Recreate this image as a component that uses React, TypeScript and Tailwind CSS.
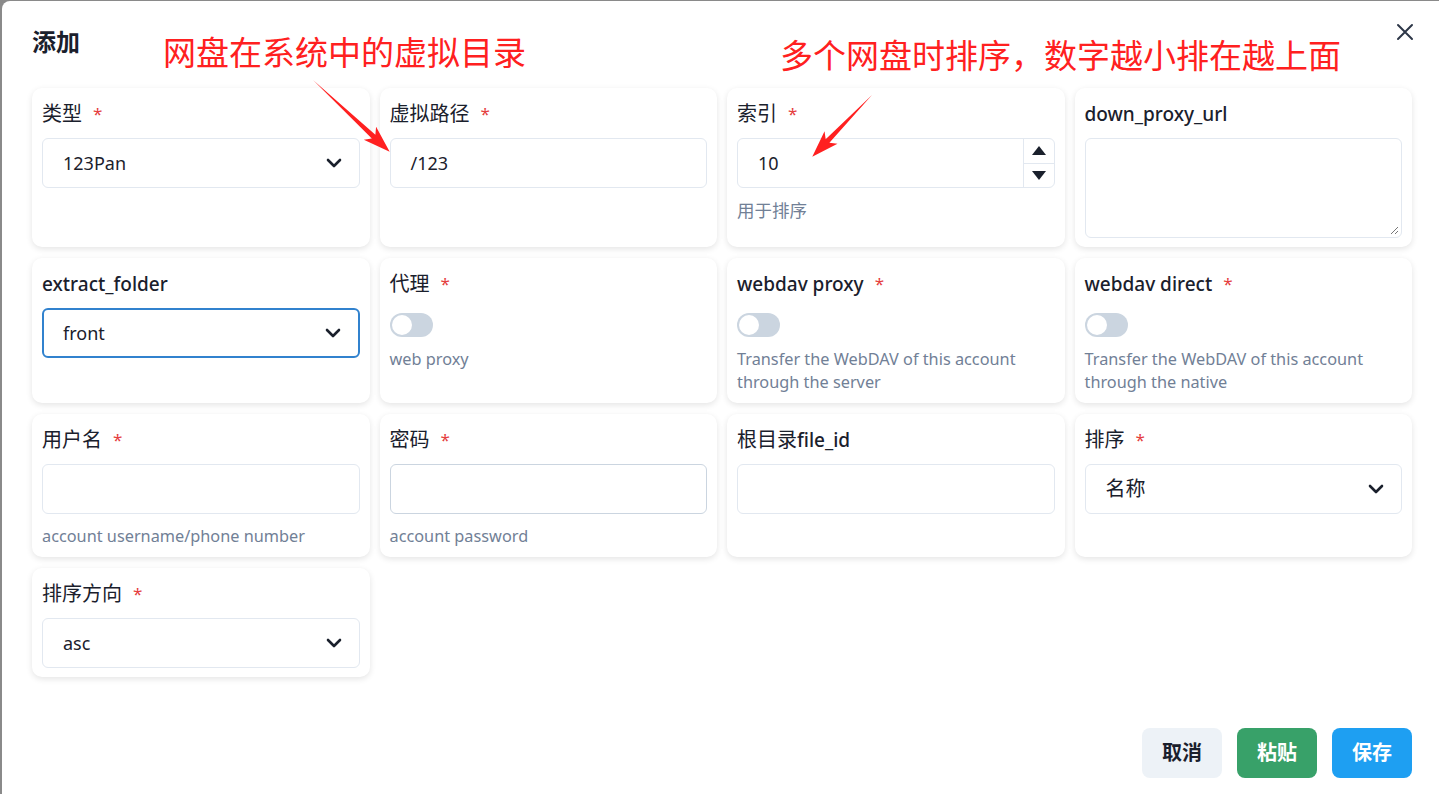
import React from "react";

const FONT = "font-['Noto_Sans','Noto_Sans_CJK_SC',sans-serif]";

function Chevron() {
  return (
    <svg
      className="absolute right-[13px] top-1/2 -translate-y-1/2"
      width="24"
      height="24"
      viewBox="0 0 24 24"
      fill="none"
      stroke="#1a202c"
      strokeWidth="2.6"
      strokeLinecap="round"
      strokeLinejoin="round"
    >
      <path d="m6 9 6 6 6-6" />
    </svg>
  );
}

function Label({ children, required }: { children: React.ReactNode; required?: boolean }) {
  return (
    <div className="h-[32px] flex items-center text-[19px] text-[#1a202c] mb-[8px]">
      <span>{children}</span>
      {required && <span className="ml-[11px] text-[#e53e3e] text-[17px]">*</span>}
    </div>
  );
}

function Zh({ children }: { children: React.ReactNode }) {
  return <span className="text-[20px]">{children}</span>;
}

function Help({ children }: { children: React.ReactNode }) {
  return <div className="mt-[11px] text-[16.3px] leading-[23px] text-[#718096]">{children}</div>;
}

function Card({ children }: { children: React.ReactNode }) {
  return (
    <div className="rounded-[10px] bg-white shadow-[0_2px_6px_rgba(0,0,0,0.11)] px-[10px] pt-[10px] pb-[9px]">
      {children}
    </div>
  );
}

function Select({ value, focused }: { value: React.ReactNode; focused?: boolean }) {
  return (
    <div
      className={
        focused
          ? "relative h-[50px] rounded-[6px] border-2 border-[#3182ce] flex items-center pl-[19px] text-[18px] text-[#1a202c]"
          : "relative h-[50px] rounded-[6px] border border-[#e2e8f0] flex items-center pl-[20px] text-[18px] text-[#1a202c]"
      }
    >
      {value}
      <Chevron />
    </div>
  );
}

function Input({ value, hover }: { value?: string; hover?: boolean }) {
  return (
    <div
      className={
        hover
          ? "h-[50px] rounded-[6px] border border-[#cbd5e0] flex items-center pl-[20px] text-[18px] text-[#1a202c]"
          : "h-[50px] rounded-[6px] border border-[#e2e8f0] flex items-center pl-[20px] text-[18px] text-[#1a202c]"
      }
    >
      {value}
    </div>
  );
}

function Switch() {
  return (
    <div className="mt-[13px] w-[43px] h-[24px] rounded-full bg-[#cbd5e0] flex items-center">
      <div className="ml-[2px] w-[20px] h-[20px] rounded-full bg-white" />
    </div>
  );
}

function Arrow({ x, y, angle, len }: { x: number; y: number; angle: number; len: number }) {
  const L = len;
  const pts = `0,0 ${L - 22},2.6 ${L - 27},9 ${L},0 ${L - 27},-9 ${L - 22},-2.6`;
  return (
    <g transform={`translate(${x},${y}) rotate(${angle})`}>
      <polygon points={pts} fill="#ff2020" />
    </g>
  );
}

export default function App() {
  return (
    <div className={`h-screen w-full overflow-hidden bg-[#8a8a8a] ${FONT}`}>
      <div className="relative ml-[2px] mt-[1px] w-[1440px] h-[900px] bg-white rounded-tl-[8px] px-[30px] pt-[25px]">
        <div className="h-[32px] flex items-center text-[24px] font-bold text-[#1a202c]">添加</div>
        <button className="absolute right-[28px] top-[22px] w-[18px] h-[18px] flex items-center justify-center">
          <svg width="18" height="18" viewBox="0 0 18 18" fill="none" stroke="#2d3748" strokeWidth="2" strokeLinecap="round">
            <path d="M2 2 L16 16 M16 2 L2 16" />
          </svg>
        </button>

        <div className="mt-[30px] grid grid-cols-4 gap-x-[10px] gap-y-[11px]">
          <Card>
            <Label required><Zh>类型</Zh></Label>
            <Select value="123Pan" />
          </Card>
          <Card>
            <Label required><Zh>虚拟路径</Zh></Label>
            <Input value="/123" />
          </Card>
          <Card>
            <Label required><Zh>索引</Zh></Label>
            <div className="h-[50px] rounded-[6px] border border-[#e2e8f0] flex items-stretch text-[18px] text-[#1a202c]">
              <div className="flex-1 flex items-center pl-[20px]">10</div>
              <div className="w-[31px] border-l border-[#e2e8f0] flex flex-col">
                <div className="flex-1 flex items-center justify-center border-b border-[#e2e8f0]">
                  <svg width="14" height="9" viewBox="0 0 14 9"><polygon points="7,0 14,9 0,9" fill="#1a202c" /></svg>
                </div>
                <div className="flex-1 flex items-center justify-center">
                  <svg width="14" height="9" viewBox="0 0 14 9"><polygon points="0,0 14,0 7,9" fill="#1a202c" /></svg>
                </div>
              </div>
            </div>
            <Help><span className="text-[17.5px]">用于排序</span></Help>
          </Card>
          <Card>
            <Label>
              <span className="font-medium">down_proxy_url</span>
            </Label>
            <div className="relative h-[100px] rounded-[6px] border border-[#e2e8f0]">
              <svg className="absolute right-[2px] bottom-[2px]" width="10" height="10" viewBox="0 0 10 10" stroke="#777" strokeWidth="1">
                <path d="M9 2 L2 9 M9 6 L6 9" />
              </svg>
            </div>
          </Card>

          <Card>
            <Label>
              <span className="font-medium">extract_folder</span>
            </Label>
            <Select value="front" focused />
          </Card>
          <Card>
            <Label required><Zh>代理</Zh></Label>
            <Switch />
            <Help>web proxy</Help>
          </Card>
          <Card>
            <Label required>
              <span className="font-medium">webdav proxy</span>
            </Label>
            <Switch />
            <Help>
              Transfer the WebDAV of this account
              <br />
              through the server
            </Help>
          </Card>
          <Card>
            <Label required>
              <span className="font-medium">webdav direct</span>
            </Label>
            <Switch />
            <Help>
              Transfer the WebDAV of this account
              <br />
              through the native
            </Help>
          </Card>

          <Card>
            <Label required><Zh>用户名</Zh></Label>
            <Input />
            <Help>account username/phone number</Help>
          </Card>
          <Card>
            <Label required><Zh>密码</Zh></Label>
            <Input hover />
            <Help>account password</Help>
          </Card>
          <Card>
            <Label>
              <Zh>根目录</Zh><span className="font-medium">file_id</span>
            </Label>
            <Input />
          </Card>
          <Card>
            <Label required><Zh>排序</Zh></Label>
            <Select value={<span className="text-[20px]">名称</span>} />
          </Card>

          <Card>
            <Label required><Zh>排序方向</Zh></Label>
            <Select value="asc" />
          </Card>
        </div>

        <div className="mt-[51px] flex justify-end gap-[15px]">
          <button className="w-[80px] h-[50px] rounded-[8px] bg-[#edf2f7] text-[20px] font-bold text-[#1a202c]">取消</button>
          <button className="w-[80px] h-[50px] rounded-[8px] bg-[#38a169] text-[20px] font-bold text-white">粘贴</button>
          <button className="w-[80px] h-[50px] rounded-[8px] bg-[#1e9ff2] text-[20px] font-bold text-white">保存</button>
        </div>

        <div className="absolute left-[161px] top-[35px] text-[33px] leading-none text-[#ff2020] whitespace-nowrap">
          网盘在系统中的虚拟目录
        </div>
        <div className="absolute left-[778px] top-[38px] text-[33px] leading-none text-[#ff2020] whitespace-nowrap">
          多个网盘时排序，数字越小排在越上面
        </div>
        <svg className="absolute left-[-2px] top-[-1px] pointer-events-none" width="1440" height="300">
          <Arrow x={313} y={80} angle={43.1} len={105} />
          <Arrow x={872} y={95} angle={134} len={86} />
        </svg>
      </div>
    </div>
  );
}
